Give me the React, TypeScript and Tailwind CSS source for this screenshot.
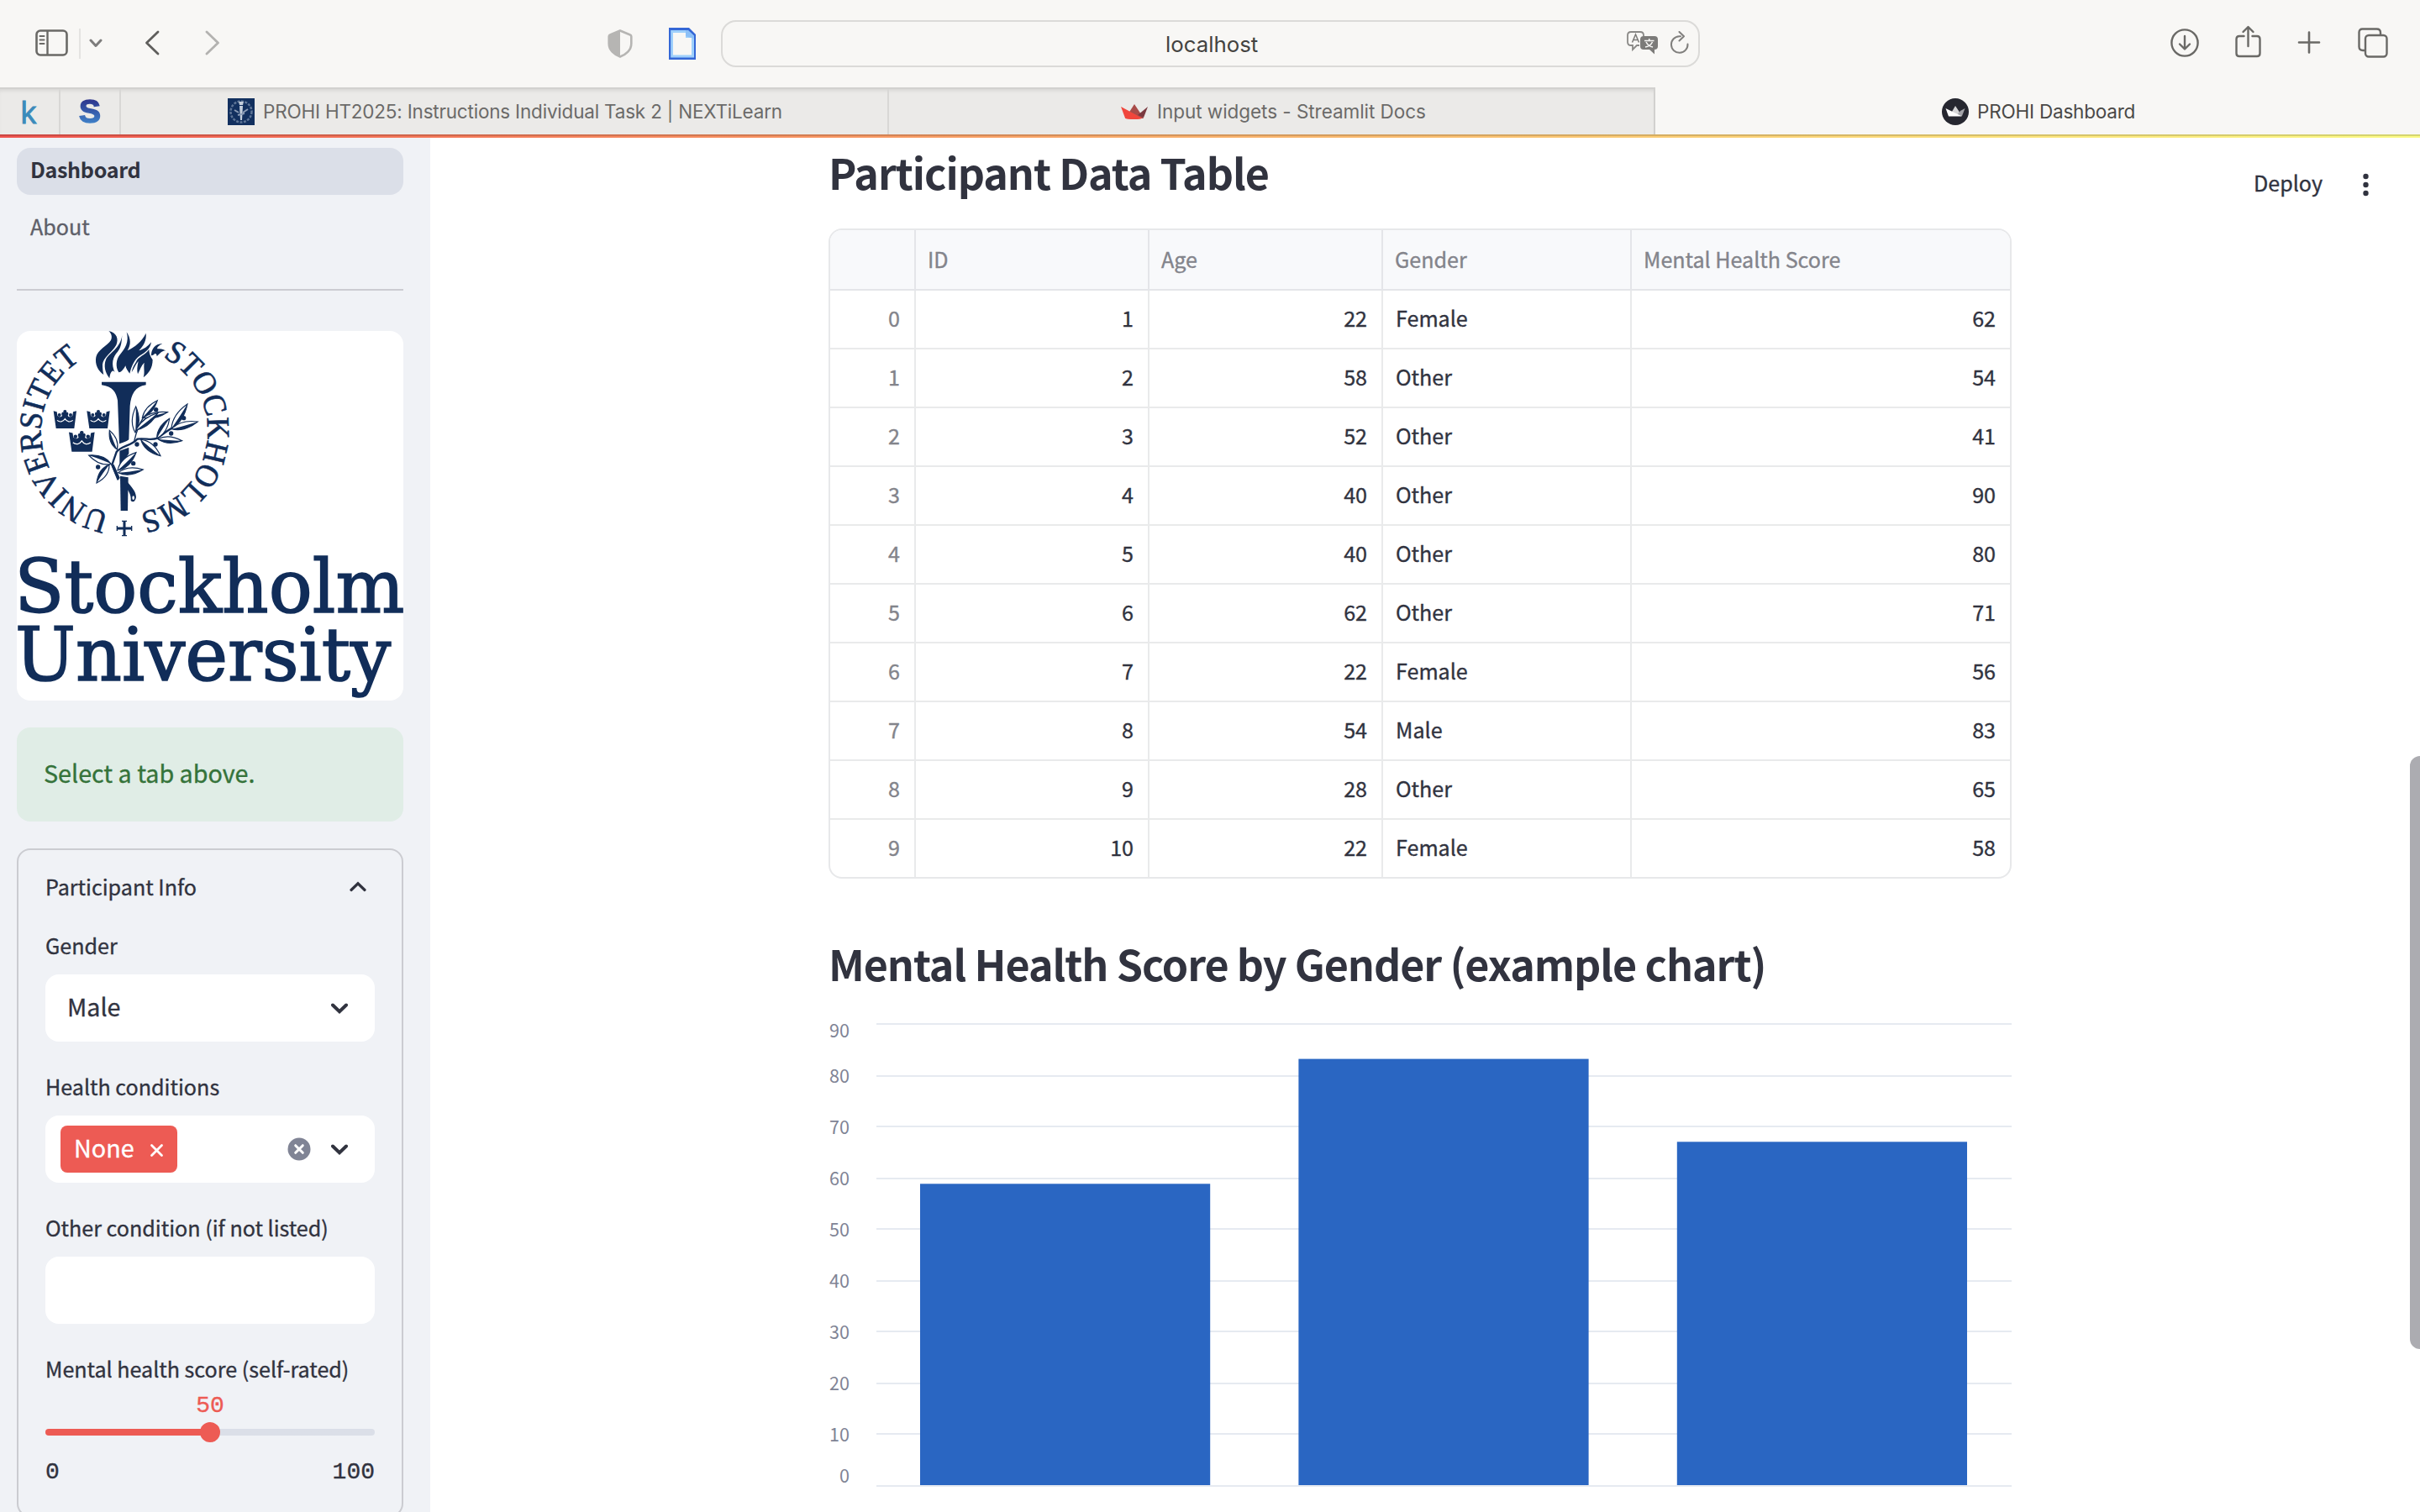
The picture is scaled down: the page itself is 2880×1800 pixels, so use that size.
import React from "react";

const NAVY = "#112d59";

/* ---------- Browser chrome ---------- */

function SidebarIcon() {
  return (
    <svg className="h-[32px] w-[39px]" viewBox="0 0 39 32" fill="none" stroke="#6a6966">
      <rect x="1.5" y="1.5" width="36" height="29" rx="4.5" strokeWidth="2.6" />
      <path d="M14.5 2V30" strokeWidth="2.4" />
      <path d="M5.5 8H10.5M5.5 12.5H10.5M5.5 17H10.5" strokeWidth="2" strokeLinecap="round" />
    </svg>
  );
}

function ShieldIcon() {
  return (
    <svg className="h-[34px] w-[30px]" viewBox="0 0 30 34" fill="none">
      <path d="M15 1.5L27 6.5Q28.3 7 28.3 8.5V17C28.3 24.5 22 30 15 32.5C8 30 1.7 24.5 1.7 17V8.5Q1.7 7 3 6.5Z" stroke="#b6b5b3" strokeWidth="2.6" />
      <path d="M15 1.5L3 6.5Q1.7 7 1.7 8.5V17C1.7 24.5 8 30 15 32.5Z" fill="#b6b5b3" />
    </svg>
  );
}

function DocIcon() {
  return (
    <svg className="h-[38px] w-[32px]" viewBox="0 0 32 38">
      <path d="M0 0H24L32 8V38H0Z" fill="#3467d6" />
      <path d="M2.2 3H22.5L30 10V35.5H2.2Z" fill="#9fd0fb" />
      <path d="M5 6H20V12H27V32.5H5Z" fill="#f8f7f5" />
      <path d="M20 3H23L30 9.5V13L20 10Z" fill="#8cc0f7" />
    </svg>
  );
}

function TranslateIcon() {
  return (
    <svg className="h-[28px] w-[38px]" viewBox="0 0 38 28" fill="none">
      <path d="M15 17H12L7 22V17H5Q1 17 1 13V5Q1 1 5 1H16Q20 1 20 5V6" stroke="#8a8987" strokeWidth="1.8" />
      <path d="M6.5 13.5L10.5 4L14.5 13.5M8 10.5H13" stroke="#7c7b79" strokeWidth="1.5" />
      <path d="M20 6H33Q37 6 37 10V18Q37 22 33 22V27.5L27 22H20Q16 22 16 18V10Q16 6 20 6Z" fill="#7c7b79" />
      <path d="M21 11.5H32.5M26.7 9V11.5M23 13C24.5 16 28 18.5 31 19M30.5 13C29 16 26 18.5 22 19" stroke="#f8f7f5" strokeWidth="1.6" />
    </svg>
  );
}

function ReloadIcon() {
  return (
    <svg className="h-[28px] w-[24px]" viewBox="0 0 24 28" fill="none" stroke="#807f7d" strokeWidth="2">
      <path d="M13 6.2H11.5A9.8 9.8 0 1 0 21.5 15.5" strokeLinecap="round" />
      <path d="M11.5 1L17 6.3L11.5 11.5" strokeLinecap="round" strokeLinejoin="round" />
    </svg>
  );
}

function Toolbar() {
  return (
    <div className="flex h-[104px] items-start bg-[#f8f7f5]">
      <div className="ml-[42px] mt-[35px]"><SidebarIcon /></div>
      <div className="ml-[13px] mt-[34px] h-[36px] w-[2px] bg-[#e4e3e1]" />
      <svg className="ml-[10px] mt-[46px] h-[11px] w-[16px]" viewBox="0 0 16 11" fill="none" stroke="#7d7c7c" strokeWidth="3" strokeLinecap="round" strokeLinejoin="round">
        <path d="M2 2L8 8.5L14 2" />
      </svg>
      <svg className="ml-[50px] mt-[36px] h-[30px] w-[18px]" viewBox="0 0 18 30" fill="none" stroke="#5f5e5c" strokeWidth="2.8" strokeLinecap="round" strokeLinejoin="round">
        <path d="M16 2L2.5 15L16 28" />
      </svg>
      <svg className="ml-[54px] mt-[36px] h-[30px] w-[18px]" viewBox="0 0 18 30" fill="none" stroke="#b3b2b0" strokeWidth="2.8" strokeLinecap="round" strokeLinejoin="round">
        <path d="M2 2L15.5 15L2 28" />
      </svg>
      <div className="ml-[461px] mt-[35px]"><ShieldIcon /></div>
      <div className="ml-[43px] mt-[33px]"><DocIcon /></div>
      <div className="ml-[30px] mt-[24px] flex h-[56px] w-[1165px] items-start rounded-[18px] border-2 border-[#dbdad8] font-['Inter',sans-serif]">
        <div className="ml-[527px] mt-[10px] w-[110px] whitespace-nowrap text-[25.8px] leading-[34px] text-[#444341]">localhost</div>
        <div className="ml-[439px] mt-[11px]"><TranslateIcon /></div>
        <div className="ml-[13px] mt-[11px]"><ReloadIcon /></div>
      </div>
      <svg className="ml-[560px] mt-[34px] h-[34px] w-[34px]" viewBox="0 0 34 34" fill="none" stroke="#6a6966" strokeWidth="2.4" strokeLinecap="round" strokeLinejoin="round">
        <circle cx="17" cy="17" r="15.6" />
        <path d="M17 9V24M11 18.5L17 24.5L23 18.5" />
      </svg>
      <svg className="ml-[43px] mt-[30px] h-[39px] w-[31px]" viewBox="0 0 31 39" fill="none" stroke="#6a6966" strokeWidth="2.4" strokeLinecap="round" strokeLinejoin="round">
        <path d="M10.500 13H5Q1.500 13 1.500 16.500V33.500Q1.500 37 5 37H26Q29.500 37 29.500 33.500V16.500Q29.500 13 26 13H20.500" />
        <path d="M15.500 25V2.500M9.500 8L15.500 2L21.500 8" />
      </svg>
      <svg className="ml-[43px] mt-[37px] h-[27px] w-[28px]" viewBox="0 0 28 27" fill="none" stroke="#6a6966" strokeWidth="2.6" strokeLinecap="round">
        <path d="M14 1.500V25.500M2 13.500H26" />
      </svg>
      <svg className="ml-[44px] mt-[33px] h-[36px] w-[36px]" viewBox="0 0 36 36" fill="none" stroke="#6a6966" strokeWidth="2.4">
        <rect x="9" y="9" width="25.500" height="25.500" rx="4" />
        <path d="M8 27H6Q1.500 27 1.500 22.500V5.500Q1.500 1.500 5.500 1.500H22.500Q27 1.500 27 6V8" />
      </svg>
    </div>
  );
}

function TabBar() {
  return (
    <div className="flex h-[56px] bg-[#f8f7f5] font-['Inter',sans-serif] text-[22.5px] leading-[32px] tracking-[-0.2px] text-[#6b6a69]">
      <div className="flex w-[1970px] border-r-2 border-t-2 border-[#d2d1cf] bg-[#ebeae8] shadow-[inset_0_4px_4px_-2px_rgba(0,0,0,0.09)]">
        <div className="flex w-[72px] border-r-2 border-[#d8d7d5] pl-[24px] pt-[9px]">
          <span className="font-['Open_Sans',sans-serif] text-[37px] leading-[36px] text-[#3b8bbb] [-webkit-text-stroke:1px_#3b8bbb]">k</span>
        </div>
        <div className="flex w-[72px] justify-center border-r-2 border-[#d8d7d5] pt-[9px]">
          <span className="bg-linear-to-b from-[#2b2a86] to-[#47a6e4] bg-clip-text font-['Liberation_Sans',sans-serif] text-[39px] font-bold leading-[36px] text-transparent [-webkit-text-stroke:1.5px_transparent]">S</span>
        </div>
        <div className="flex w-[914px] border-r-2 border-[#d8d7d5] pl-[127px] pt-[11px]">
          <svg className="h-[32px] w-[32px]" viewBox="0 0 32 32" fill="none">
            <rect width="32" height="32" fill="#12305f" />
            <circle cx="16" cy="16" r="12.500" stroke="#5e7597" strokeWidth="2.500" strokeDasharray="3 1.500" />
            <path d="M13 4H19L18 8H14ZM14 9H18L17 26H15Z" fill="#c4cedb" />
            <path d="M8 14L13 17M18 17L24 13M12 20L20 18" stroke="#8b9cb6" strokeWidth="2" />
          </svg>
          <span className="ml-[10px] whitespace-nowrap">PROHI HT2025: Instructions Individual Task 2 | NEXTiLearn</span>
        </div>
        <div className="flex pl-[276px] pt-[11px]">
          <svg className="mt-[7px] h-[18px] w-[32px]" viewBox="0 0 32 18">
            <path d="M16 0L22 9L27 17H5Z" fill="#a84b48" />
            <path d="M32 3L27 16L20 13Z" fill="#7b3a40" />
            <path d="M0 3L25 16.500Q24 18 16 18Q6 18 5 16.500Z" fill="#f0463c" />
          </svg>
          <span className="ml-[11px] whitespace-nowrap tracking-[-0.05px]">Input widgets - Streamlit Docs</span>
        </div>
      </div>
      <div className="flex pl-[341px] pt-[13px] text-[#4a4947]">
        <svg className="h-[32px] w-[32px]" viewBox="0 0 32 32">
          <circle cx="16" cy="16" r="16" fill="#262730" />
          <path d="M16 9L20 15L23 21H9Z" fill="#d5d5d7" />
          <path d="M27.500 12L24 21H17L22 15Z" fill="#a3a3a8" />
          <path d="M4.500 12L24 21.500H8Z" fill="#fff" />
        </svg>
        <span className="ml-[10px] whitespace-nowrap">PROHI Dashboard</span>
      </div>
    </div>
  );
}

/* ---------- Logo ---------- */

type LeafProps = { d: [number, number, number, number]; w?: number; flip?: boolean };

function Leaf({ d: [x1, y1, x2, y2], w = 26, flip = false }: LeafProps) {
  const len = Math.hypot(x2 - x1, y2 - y1);
  const nx = (-(y2 - y1) / len) * w * (flip ? -1 : 1);
  const ny = ((x2 - x1) / len) * w * (flip ? -1 : 1);
  const mx = x1 + (x2 - x1) * 0.42;
  const my = y1 + (y2 - y1) * 0.42;
  return (
    <g>
      <path d={`M${x1} ${y1}Q${mx + nx} ${my + ny} ${x2} ${y2}Q${mx - nx} ${my - ny} ${x1} ${y1}Z`} fill="#fff" stroke={NAVY} strokeWidth="3.500" />
      <path d={`M${x1} ${y1}Q${mx + nx} ${my + ny} ${x2} ${y2}Q${mx + nx * 0.1} ${my + ny * 0.1} ${x1} ${y1}Z`} fill={NAVY} />
    </g>
  );
}

function Crown({ x, y, s = 1 }: { x: number; y: number; s?: number }) {
  return (
    <g transform={`translate(${x} ${y}) scale(${s})`}>
      <path d="M0 4L12 7L14 20C20 26 28 26 31 20C26 12 31 6 36 9C33 3 37 0 41 0C45 0 49 3 46 9C51 6 56 12 51 20C54 26 62 26 68 20L70 7L82 4L74 66H9Z" fill={NAVY} />
      <path d="M13 37C22 45 34 43 41 32C48 43 60 45 69 37" stroke="#fff" strokeWidth="3.500" fill="none" />
      <circle cx="21" cy="18" r="6" fill={NAVY} />
      <circle cx="61" cy="18" r="6" fill={NAVY} />
    </g>
  );
}

const leaves: LeafProps[] = [
  { d: [483, 405, 485, 312], w: 24 },
  { d: [508, 352, 562, 290], w: 20 },
  { d: [512, 352, 598, 332], w: 18 },
  { d: [486, 396, 564, 334], w: 22 },
  { d: [560, 425, 605, 355], w: 22, flip: true },
  { d: [612, 390, 669, 303], w: 24 },
  { d: [612, 392, 706, 366], w: 24 },
  { d: [564, 428, 650, 434], w: 22 },
  { d: [503, 430, 573, 488], w: 26 },
  { d: [418, 465, 391, 397], w: 22, flip: true },
  { d: [397, 517, 317, 486], w: 24 },
  { d: [390, 520, 345, 585], w: 24 },
  { d: [420, 540, 486, 476], w: 26 },
  { d: [422, 548, 511, 537], w: 24 },
];

const berries = [[557, 323], [656, 353], [611, 408], [555, 447], [489, 447], [350, 528], [476, 515]];

function Logo() {
  return (
    <div className="mt-12 h-[440px] w-[460px] overflow-hidden rounded-2xl bg-white">
      <svg className="h-[440px] w-[460px]" viewBox="60 42 1380 1320">
        <defs>
          <path id="ringRight" d="M444 102A297 297 0 0 1 444 696" />
          <path id="ringLeft" d="M444 696A297 297 0 0 1 444 102" />
        </defs>
        <g fill={NAVY}>
          <path d="M388 42C418 48 424 72 415 92C400 120 368 135 366 162C366 178 368 190 370 198C350 185 338 160 343 135C348 110 383 95 396 75C402 62 397 50 388 42Z" />
          <path d="M436 57C434 80 434 98 420 116C402 136 396 160 410 190C402 176 393 190 391 211C374 190 370 165 378 145C388 120 430 106 436 57Z" />
          <path d="M452 46C468 70 468 92 455 112C482 98 505 82 521 50C524 75 512 96 496 112C512 108 528 97 540 82C537 105 520 118 500 130C478 146 470 168 463 194C457 185 450 178 448 166C441 180 432 190 424 190C412 170 414 145 427 128C447 106 462 80 452 46Z" />
          <path d="M532 108C520 128 492 134 486 152C474 170 472 180 470 190C478 178 484 160 494 150C490 168 488 184 492 196C500 180 505 165 515 155C512 175 518 190 512 208C530 195 545 175 545 145C536 132 532 120 532 108Z" />
          <path d="M540 130C540 108 552 88 580 87C566 94 560 102 562 106C576 104 585 108 592 112C574 114 570 124 560 133C560 124 556 122 552 123C550 128 546 128 540 130Z" />
          <path d="M363 224H521V235C482 240 468 268 464 310L460 430C445 445 430 455 427 470L420 290C415 262 402 240 363 235Z" />
          <path d="M427 470L460 458V480L427 530Z" />
          <path d="M429 560L458 565L456 684H431Z" />
          <path d="M454 580C470 600 485 615 486 635C484 650 475 656 467 648C469 630 460 615 455 608Z" />
          <ellipse cx="476" cy="638" rx="4" ry="7" fill="#fff" />
        </g>
        <g fill="none">
          <path d="M424 455C440 450 465 440 474 432" stroke="#fff" strokeWidth="18" />
          <path d="M422 574L400 520L416 474C432 452 470 452 490 428C520 424 540 434 562 425C590 405 600 395 620 386" stroke={NAVY} strokeWidth="7" strokeLinejoin="round" />
          <path d="M402 520L424 570" stroke={NAVY} strokeWidth="10" />
          <path d="M478 440C486 405 495 375 514 348" stroke={NAVY} strokeWidth="4" />
        </g>
        {leaves.map((leaf, i) => <Leaf key={i} {...leaf} />)}
        {berries.map(([x, y]) => <circle key={`${x}-${y}`} cx={x} cy={y} r="8" fill={NAVY} />)}
        <Crown x={191} y={324} />
        <Crown x={310} y={324} />
        <Crown x={246} y={399} s={1.12} />
        <path d="M444 721V773M418 747H470" stroke={NAVY} strokeWidth="9" />
        <path d="M435 721H453M435 773H453M418 738V756M470 738V756" stroke={NAVY} strokeWidth="4" />
        <g fill={NAVY} stroke={NAVY} strokeWidth="2" className="font-['Liberation_Serif',serif] text-[115px]">
          <text><textPath href="#ringRight" startOffset="142" textLength="736" lengthAdjust="spacingAndGlyphs">STOCKHOLMS</textPath></text>
          <text><textPath href="#ringLeft" startOffset="54" textLength="714" lengthAdjust="spacingAndGlyphs">UNIVERSITET</textPath></text>
        </g>
        <g fill={NAVY} stroke={NAVY} strokeWidth="5" className="font-['DejaVu_Serif',serif] text-[266px]">
          <text x="52" y="1048" textLength="1392" lengthAdjust="spacingAndGlyphs">Stockholm</text>
          <text x="54" y="1289" textLength="1342" lengthAdjust="spacingAndGlyphs">University</text>
        </g>
      </svg>
    </div>
  );
}

/* ---------- Sidebar ---------- */

function Chevron({ up = false, w = 3.6 }: { up?: boolean; w?: number }) {
  return (
    <svg className="h-[13px] w-[20px]" viewBox="0 0 20 13" fill="none" stroke="#31333f" strokeWidth={w} strokeLinecap="round" strokeLinejoin="miter">
      <path d={up ? "M2 10.500L10 2.800L18 10.500" : "M2 2.500L10 10.200L18 2.500"} />
    </svg>
  );
}

function Label({ children, first = false }: { children: React.ReactNode; first?: boolean }) {
  return (
    <div className={first ? "mt-[7px] whitespace-nowrap leading-[40px]" : "mt-[33px] whitespace-nowrap leading-[40px]"}>
      {children}
    </div>
  );
}

function Sidebar() {
  return (
    <aside className="h-[1636px] w-[512px] shrink-0 overflow-hidden bg-[#f0f2f6] px-5 text-[25.1px] text-[#31333f]">
      <div className="mt-3 flex h-[56px] w-[460px] items-center rounded-2xl bg-[#dbdfe8] pb-[6px] pl-4 font-bold leading-[40px] tracking-[-0.35px] [-webkit-text-stroke:0px]">Dashboard</div>
      <div className="mt-3 flex h-[56px] w-[460px] items-center pb-[6px] pl-4 leading-[40px] text-[#5e5f69]">About</div>
      <div className="mt-[44px] h-[2px] w-[460px] bg-[#cbccd1]" />
      <Logo />
      <div className="mt-8 flex h-[112px] w-[460px] items-center rounded-2xl bg-[#e0ede6] pb-[5px] pl-8 text-[28.7px] leading-[40px] text-[#35733a]">Select a tab above.</div>
      <div className="mt-8 h-[796px] w-[460px] rounded-2xl border-2 border-[#cbccd1] px-8">
        <div className="flex h-[86px] items-center justify-between pr-[10px] leading-[40px]">
          <span>Participant Info</span>
          <Chevron up w={3.2} />
        </div>

        <Label first>Gender</Label>
        <div className="mt-[15px] flex h-[80px] items-center justify-between rounded-2xl bg-white pl-[26px] pr-[32px]">
          <span className="pb-[4px] text-[28.7px] leading-[40px]">Male</span>
          <Chevron w={4} />
        </div>

        <Label>Health conditions</Label>
        <div className="mt-[15px] flex h-[80px] items-center rounded-2xl bg-white pl-[18px] pr-[32px]">
          <div className="flex h-[56px] w-[139px] items-center justify-between rounded-lg bg-[#ed5b54] pl-[16px] pr-[16px] text-[28.7px] leading-[40px] text-white">
            <span className="pb-[4px]">None</span>
            <svg className="mt-[2px] h-[17px] w-[17px]" viewBox="0 0 17 17" stroke="#fff" strokeWidth="2.800" strokeLinecap="round">
              <path d="M2.500 2.500L14.500 14.500M14.500 2.500L2.500 14.500" />
            </svg>
          </div>
          <svg className="ml-auto mr-[24px] h-[28px] w-[28px]" viewBox="0 0 28 28">
            <circle cx="14" cy="14" r="13.500" fill="#808495" />
            <path d="M9.700 9.700L18.300 18.300M18.300 9.700L9.700 18.300" stroke="#fff" strokeWidth="3" strokeLinecap="round" />
          </svg>
          <Chevron w={4} />
        </div>

        <Label>Other condition (if not listed)</Label>
        <div className="mt-[15px] h-[80px] rounded-2xl bg-white" />

        <Label>Mental health score (self-rated)</Label>
        <div className="font-['Liberation_Mono',monospace] text-[28px] leading-[32px]">
          <div className="mt-[9px] text-center text-[#ed5b54]">50</div>
          <div className="mt-[11px] flex h-2 items-center justify-center rounded-full bg-linear-to-r from-[#ed5b54] from-50% to-[#dbdfe8] to-50%">
            <div className="h-6 w-6 shrink-0 rounded-full bg-[#ed5b54]" />
          </div>
          <div className="mt-[28px] flex justify-between">
            <span>0</span>
            <span>100</span>
          </div>
        </div>
      </div>
    </aside>
  );
}

/* ---------- Main content ---------- */

const rows: [number, number, number, string, number][] = [
  [0, 1, 22, "Female", 62],
  [1, 2, 58, "Other", 54],
  [2, 3, 52, "Other", 41],
  [3, 4, 40, "Other", 90],
  [4, 5, 40, "Other", 80],
  [5, 6, 62, "Other", 71],
  [6, 7, 22, "Female", 56],
  [7, 8, 54, "Male", 83],
  [8, 9, 28, "Other", 65],
  [9, 10, 22, "Female", 58],
];

function DataTable() {
  return (
    <div className="mt-[36px] h-[774px] w-[1408px] overflow-hidden rounded-2xl border-2 border-[#e7e8ea] text-[25.1px] leading-[40px] text-[#31333f]">
      <div className="grid h-[72px] grid-cols-[102px_278px_278px_296px_450px] border-b-2 border-[#e4e5e9] bg-[#f8f9fb] text-[#83848b]">
        <div className="border-r-2 border-[#e4e5e9]" />
        <div className="border-r-2 border-[#e4e5e9] pl-[14px] pt-[14px]">ID</div>
        <div className="border-r-2 border-[#e4e5e9] pl-[14px] pt-[14px]">Age</div>
        <div className="border-r-2 border-[#e4e5e9] pl-[14px] pt-[14px]">Gender</div>
        <div className="pl-[14px] pt-[14px]">Mental Health Score</div>
      </div>
      {rows.map(([idx, id, age, gender, score]) => (
        <div key={idx} className="grid h-[70px] grid-cols-[102px_278px_278px_296px_450px] border-b-2 border-[#e9eaeb]">
          <div className="border-r-2 border-[#e9eaeb] pr-[17px] pt-[12px] text-right text-[#83848b]">{idx}</div>
          <div className="border-r-2 border-[#e9eaeb] pr-[17px] pt-[12px] text-right">{id}</div>
          <div className="border-r-2 border-[#e9eaeb] pr-[17px] pt-[12px] text-right">{age}</div>
          <div className="border-r-2 border-[#e9eaeb] pl-[15px] pt-[12px]">{gender}</div>
          <div className="pr-[17px] pt-[12px] text-right">{score}</div>
        </div>
      ))}
    </div>
  );
}

/* Each tick: value, gridline y, label baseline y. */
const ticks: [number, number, number][] = [
  [90, 19, 35],
  [80, 81, 89],
  [70, 141, 150],
  [60, 203, 211],
  [50, 263, 272],
  [40, 325, 333],
  [30, 385, 394],
  [20, 447, 455],
  [10, 507, 516],
  [0, 569, 565],
];

const bars = [
  { x: 109, y: 209.3 },
  { x: 559.4, y: 60.6 },
  { x: 1009.8, y: 159.3 },
];

function Chart() {
  return (
    <svg className="mt-[22px] h-[600px] w-[1408px]" viewBox="0 0 1408 600">
      {ticks.map(([value, y, base]) => (
        <g key={value}>
          <path d={`M57 ${y}H1408`} stroke="#e6eaf1" strokeWidth="2" />
          <text x="25" y={base} textAnchor="end" fill="#808495" className="text-[21.6px]">{value}</text>
        </g>
      ))}
      {bars.map((b) => <rect key={b.x} x={b.x} y={b.y} width="345.200" height={568 - b.y} fill="#2a66c2" />)}
    </svg>
  );
}

export default function App() {
  return (
    <div className="h-[1800px] w-[2880px] overflow-hidden bg-white">
      <Toolbar />
      <TabBar />
      <div className="h-[4px] bg-linear-to-r from-[#f0544f] via-[#f9b16c] to-[#fbfb84]">
        <div className="h-[2px] bg-black/15" />
      </div>
      <div className="flex h-[1636px] font-['Noto_Sans_CJK_SC',sans-serif] [-webkit-text-stroke:0.35px]">
        <Sidebar />
        <main className="ml-[474px] w-[1408px] shrink-0 text-[#31333f]">
          <h2 className="mt-2 whitespace-nowrap text-[50.2px] font-bold leading-[64px] tracking-[-1.06px] [-webkit-text-stroke:0px]">Participant Data Table</h2>
          <DataTable />
          <h2 className="mt-[68px] whitespace-nowrap text-[50.2px] font-bold leading-[64px] tracking-[-1.06px] [-webkit-text-stroke:0px]">Mental Health Score by Gender (example chart)</h2>
          <Chart />
        </main>
        <div className="flex flex-1 flex-col text-[#31333f]">
          <div className="mt-[33px] flex h-[46px] items-start text-[25.1px] leading-[40px]">
            <span className="ml-[288px]">Deploy</span>
            <svg className="ml-auto mr-[60px] mt-[7px] h-[32px] w-[9px]" viewBox="0 0 9 32" fill="#31333f">
              <circle cx="4.500" cy="6" r="3.200" />
              <circle cx="4.500" cy="16" r="3.200" />
              <circle cx="4.500" cy="26" r="3.200" />
            </svg>
          </div>
          <div className="ml-auto mt-[657px] h-[706px] w-[12px] rounded-l-full bg-[#acacb1]" />
        </div>
      </div>
    </div>
  );
}
